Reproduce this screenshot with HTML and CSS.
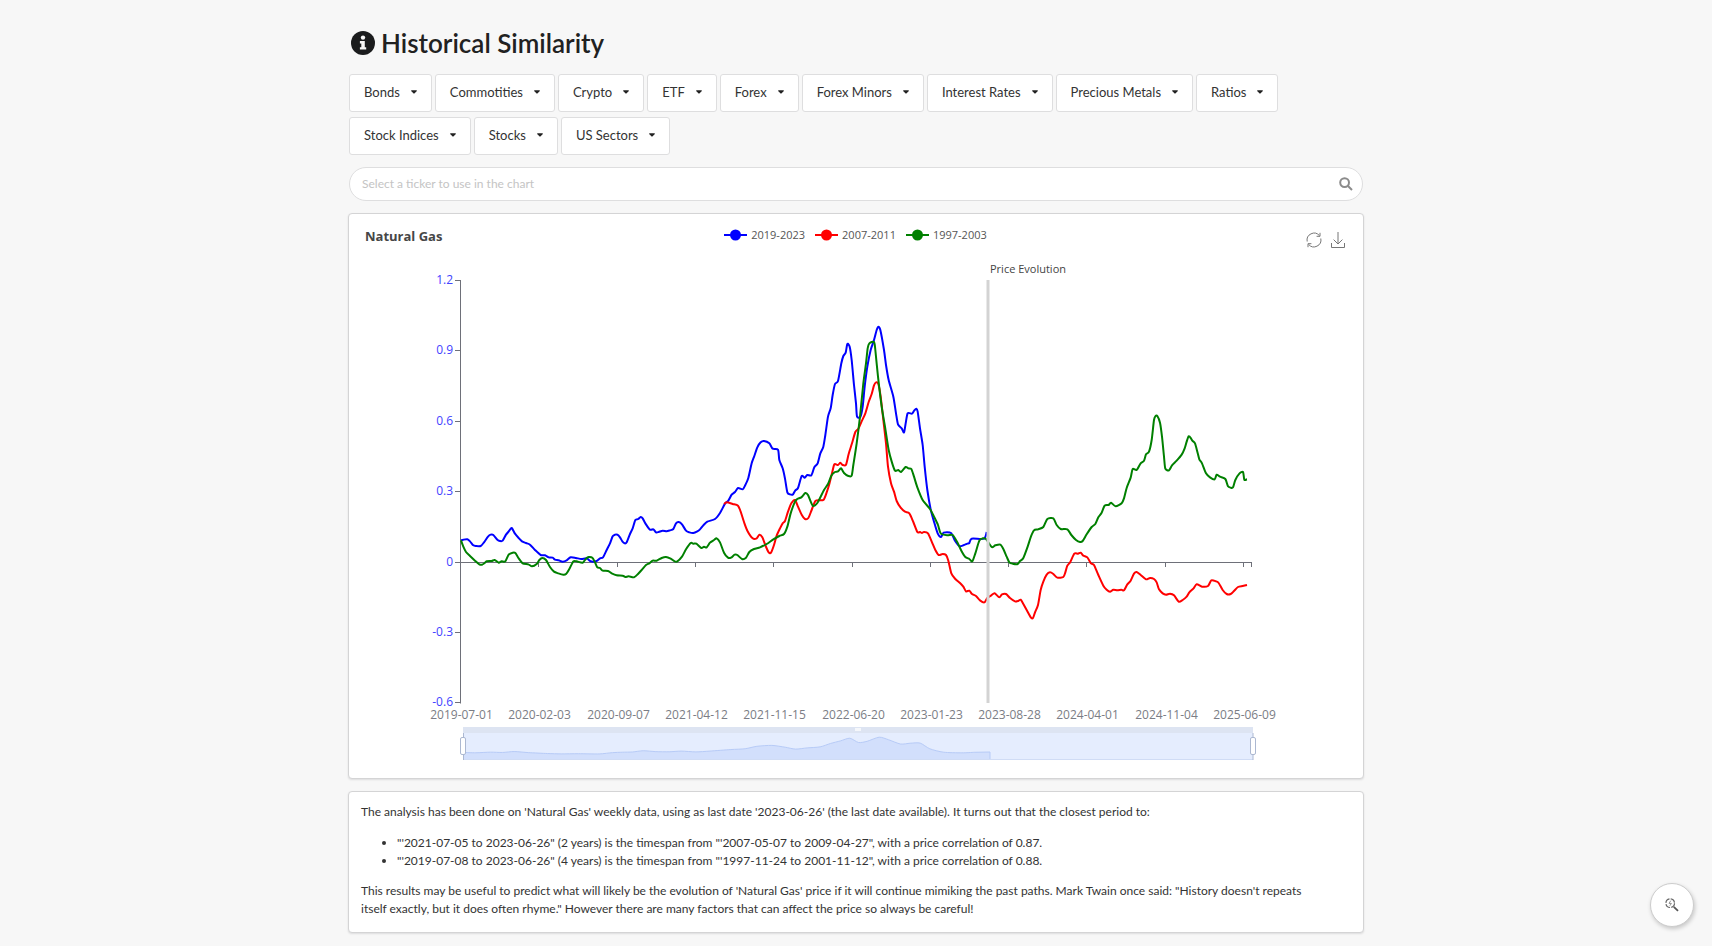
FILE: index.html
```html
<!DOCTYPE html>
<html lang="en">
<head>
<meta charset="utf-8">
<meta name="viewport" content="width=device-width, initial-scale=1">
<title>Historical Similarity</title>
<link rel="stylesheet" href="styles.css">
</head>
<body>
<svg class="defs" width="0" height="0" aria-hidden="true">
  <symbol id="caret" viewBox="0 0 7 4"><path d="M0.8 0h5.4q1.2 .4 .4 1.2L4.2 3.6q-.7 .6-1.4 0L.4 1.2Q-.4 .4 .8 0z"/></symbol>
</svg>
<main class="page">
  <h1 class="title">
    <svg class="title-icon" viewBox="0 0 24 24" aria-hidden="true"><circle cx="12" cy="12" r="12" fill="#1b1c1d"/><circle cx="12" cy="6.6" r="2.2" fill="#f7f7f7"/><path d="M8.9 10h4.9v6.2h1.4v2.4H8.900v-2.400h1.400v-3.800H8.900z" fill="#f7f7f7"/></svg>
    Historical Similarity
  </h1>
  <nav class="menus" aria-label="Tickers">
    <button class="menu" type="button">Bonds<svg class="caret"><use href="#caret"/></svg></button>
    <button class="menu" type="button">Commotities<svg class="caret"><use href="#caret"/></svg></button>
    <button class="menu" type="button">Crypto<svg class="caret"><use href="#caret"/></svg></button>
    <button class="menu" type="button">ETF<svg class="caret"><use href="#caret"/></svg></button>
    <button class="menu" type="button">Forex<svg class="caret"><use href="#caret"/></svg></button>
    <button class="menu" type="button">Forex Minors<svg class="caret"><use href="#caret"/></svg></button>
    <button class="menu" type="button">Interest Rates<svg class="caret"><use href="#caret"/></svg></button>
    <button class="menu" type="button">Precious Metals<svg class="caret"><use href="#caret"/></svg></button>
    <button class="menu" type="button">Ratios<svg class="caret"><use href="#caret"/></svg></button>
    <button class="menu" type="button">Stock Indices<svg class="caret"><use href="#caret"/></svg></button>
    <button class="menu" type="button">Stocks<svg class="caret"><use href="#caret"/></svg></button>
    <button class="menu" type="button">US Sectors<svg class="caret"><use href="#caret"/></svg></button>
  </nav>
  <label class="search">
    <input class="search-input" type="text" placeholder="Select a ticker to use in the chart" aria-label="Select a ticker to use in the chart">
    <svg class="search-icon" viewBox="0 0 14 14" aria-hidden="true"><circle cx="5.6" cy="5.6" r="4.4"/><path d="M9 9l4 4"/></svg>
  </label>

  <section class="card chart">
    <header class="chart-head">
      <h2 class="chart-title">Natural Gas</h2>
      <ul class="legend">
        <li class="legend-item blue"><svg class="mark" viewBox="0 0 23 12"><path d="M0 6h23"/><circle cx="11.5" cy="6" r="5.5"/></svg>2019-2023</li>
        <li class="legend-item red"><svg class="mark" viewBox="0 0 23 12"><path d="M0 6h23"/><circle cx="11.5" cy="6" r="5.5"/></svg>2007-2011</li>
        <li class="legend-item green"><svg class="mark" viewBox="0 0 23 12"><path d="M0 6h23"/><circle cx="11.5" cy="6" r="5.5"/></svg>1997-2003</li>
      </ul>
      <div class="tools">
        <button class="tool" type="button" aria-label="Restore"><svg viewBox="0 0 16 16"><path d="M1.200 9.500A7 7 0 0 1 13.400 3.600M14.800 6.500A7 7 0 0 1 2.600 12.400M14 .8V4.300H10.600M2 15.200V11.700H5.400"/></svg></button>
        <button class="tool" type="button" aria-label="Save as image"><svg viewBox="0 0 16 16"><path d="M8 0v12M3.600 7.600L8 12l4.400-4.400M1.500 11v4.500h13V11"/></svg></button>
      </div>
    </header>
    <svg class="plot" viewBox="349 260 1014 518" role="img" aria-label="Natural Gas price similarity chart">
      <g class="axis" id="axis"></g>
      <g class="labels" id="labels"></g>
      <text class="note" x="990" y="273">Price Evolution</text>
      <g class="series" id="series"></g>
      <path class="marker" d="M988 280V703"/>
      <g class="zoom">
        <path fill="#e5edfe" d="M463 733h790v27H463z"/>
        <path id="shadow" class="shadow"/>
        <path class="zoom-line" d="M463 759.500H1253"/>
        <path fill="#dde4f2" d="M463 727h790v6H463z"/>
        <path fill="#fff" opacity=".7" d="M855 728h6v3h-6z"/>
        <path class="zoom-edge" d="M463.500 733v27M1253 733v27"/>
        <rect class="grip" x="460.500" y="737.500" width="5" height="17" rx="1.500"/>
        <rect class="grip" x="1250.500" y="737.500" width="5" height="17" rx="1.500"/>
      </g>
    </svg>
  </section>

  <section class="card report">
    <p>The analysis has been done on 'Natural Gas' weekly data, using as last date '2023-06-26' (the last date available). It turns out that the closest period to:</p>
    <ul>
      <li>"'2021-07-05 to 2023-06-26" (2 years) is the timespan from "'2007-05-07 to 2009-04-27", with a price correlation of 0.87.</li>
      <li>"'2019-07-08 to 2023-06-26" (4 years) is the timespan from "'1997-11-24 to 2001-11-12", with a price correlation of 0.88.</li>
    </ul>
    <p>This results may be useful to predict what will likely be the evolution of 'Natural Gas' price if it will continue mimiking the past paths. Mark Twain once said: "History doesn't repeats itself exactly, but it does often rhyme." However there are many factors that can affect the price so always be careful!</p>
  </section>
</main>
<button class="fab" type="button" aria-label="Zoom">
  <svg viewBox="0 0 14 14"><circle cx="5.200" cy="5.200" r="4.300" fill="none" stroke="#666" stroke-width="1.200" stroke-dasharray="5.500 1.250"/><path d="M5.800 2.600L4 5.400h2.400L4.800 7.800" fill="none" stroke="#777" stroke-width=".8"/><path d="M8.800 8.800l4.200 4" stroke="#555" stroke-width="1.800"/></svg>
</button>
<script src="chart.js"></script>
</body>
</html>
```

FILE: styles.css
```css
* { box-sizing: border-box; }
body {
  margin: 0;
  background: #f7f7f7;
  color: #333;
  font: 12px/18px Lato, "Liberation Sans", sans-serif;
}
button { font: inherit; color: inherit; cursor: pointer; }
.defs { display: block; }
.page {
  max-width: 1030px;
  margin: 0 auto;
  padding: 27px 8px 13px;
}
.title {
  display: flex;
  align-items: center;
  gap: 6px;
  margin: 0 0 15px;
  padding-left: 2px;
  font-size: 26px;
  line-height: 32px;
  font-weight: 600;
  color: #212121;
}
.title-icon { width: 24px; height: 24px; }
.menus { display: flex; flex-wrap: wrap; gap: 5px 3px; margin-bottom: 12px; }
.menu {
  display: flex;
  align-items: center;
  gap: 11px;
  height: 38px;
  padding: 0 14px 2px;
  border: 1px solid #dededf;
  border-radius: 3px;
  background: #fff;
  color: #333;
  font-size: 13px;
}
.caret { width: 6px; height: 4px; fill: #222; }
.search {
  display: flex;
  align-items: center;
  height: 34px;
  padding: 0 9px 0 12px;
  margin-bottom: 12px;
  border: 1px solid #dededf;
  border-radius: 17px;
  background: #fff;
}
.search-input {
  flex: 1;
  min-width: 0;
  padding: 0;
  border: 0;
  outline: 0;
  background: none;
  font: inherit;
}
.search-input::placeholder { color: #c4c4c4; opacity: 1; }
.search-icon { width: 14px; height: 14px; fill: none; stroke: #8b8b8b; stroke-width: 2; }
.card {
  margin: 0 -1px;
  border: 1px solid #d4d4d5;
  border-radius: 4px;
  background: #fff;
  box-shadow: 0 1px 2px rgba(34, 36, 38, .12);
}
.chart {
  margin-bottom: 12px;
  font-family: "Open Sans", "Noto Sans", sans-serif;
  font-size: 12px;
}
.chart-head {
  display: grid;
  grid-template-columns: 1fr auto 1fr;
  height: 46px;
  padding: 12px 17px 0 16px;
}
.chart-title { margin: 0; font-size: 13px; line-height: 20px; color: #464646; }
.legend {
  display: flex;
  gap: 10px;
  margin: 0;
  padding: 0;
  list-style: none;
  color: #555;
  font-size: 11px;
}
.legend-item { display: flex; align-items: center; gap: 4px; height: 18px; }
.mark { width: 23px; height: 12px; stroke-width: 2; }
.blue .mark { stroke: #00f; fill: #00f; }
.red .mark { stroke: #f00; fill: #f00; }
.green .mark { stroke: #008000; fill: #008000; }
.mark circle { stroke: none; }
.tools { display: flex; justify-content: flex-end; gap: 8px; padding-top: 6px; }
.tool { width: 16px; height: 16px; padding: 0; border: 0; background: none; }
.tool svg { display: block; width: 16px; height: 16px; fill: none; stroke: #777; }
.plot { display: block; width: 100%; height: auto; }
.axis { fill: none; stroke: #6e7079; }
.x-label { fill: #7b7d85; text-anchor: middle; }
.y-label { fill: #4343ff; text-anchor: end; }
.note { fill: #444; font-size: 11px; }
.series { fill: none; stroke-width: 2; stroke-linejoin: round; }
.marker { stroke: #d3d3d3; stroke-width: 3; }
.shadow { fill: #d2dffc; stroke: #b7cbf7; }
.zoom-line { stroke: #d0dcf5; }
.zoom-edge { stroke: #acb8d1; }
.grip { fill: #fff; stroke: #acb8d1; }
.report { padding: 11px 36px 14px 12px; }
.report p { margin: 0; }
.report ul { margin: 13px 0 12px; padding-left: 36px; }
.fab {
  position: fixed;
  right: 18px;
  bottom: 19px;
  display: grid;
  place-items: center;
  width: 44px;
  height: 44px;
  padding: 0;
  border: 1px solid #ccc;
  border-radius: 50%;
  background: #fff;
  box-shadow: 1px 2px 4px rgba(0, 0, 0, .2);
}
.fab svg { width: 14px; height: 14px; }
```

FILE: chart.js
```js
// Each series is a list of parts: [origin x, origin y, "x,y x,y ..."] in thirds of a pixel.
const SERIES = [
  ["#00f", [
    [420, 480, "123,181 130,179 142,178 150,184 160,196 168,198 182,198 192,187 204,170 212,164 220,165 232,179 240,183 248,182 258,164 268,152 275,144 285,161 296,174 306,184 318,189 330,194 345,210 362,225 375,226 386,232 398,233 405,239 416,241 428,245 440,241 452,232 468,234 484,237 500,235 512,244 530,243 540,235 549,232 560,210 570,190 578,169 585,164 592,164 600,172 607,184 614,190 620,187 630,162 638,145 646,120 655,117 662,111 668,115 676,130 690,149 700,148 708,157 716,156 728,152 740,154 750,151 760,147 768,130 776,126 786,133 798,152 808,157 820,159 832,154"],
    [700, 300, "0,688 10,676 22,665 45,657 60,639 75,611 85,602 95,584 105,576 114,564 128,568 136,555 145,534 155,490 163,468 172,442 182,427 192,423 208,430 218,446 234,449 238,480 248,505 255,536 262,577 270,583 279,583 286,571 294,564 305,528 314,533 322,525 334,526 343,502 353,490 361,460 370,440 376,405 384,350 392,325 398,285 405,252 414,243 424,190 430,168 437,158 442,132 449,140 455,180 462,255 468,310 471,349 481,351 488,320 494,260 502,200 512,150 522,120 530,90 535,80 541,90 552,150 558,195 566,240 580,290 588,340 594,373 605,385 612,397 617,370 623,340 636,341 643,331 649,326 653,335 660,385 668,435 674,500 682,570 692,628 702,665 713,700 723,711 731,698 753,699 765,722 778,738 790,736 802,731 808,729 815,716 852,716 860,696"]
  ]],
  ["#f00", [
    [700, 300, "72,612 80,607 98,612 114,617 122,635 132,666 142,692 158,715 170,715 178,704 187,712 197,738 206,757 213,758 222,735 230,707 240,685 248,670 255,663 264,635 274,610 285,600 294,620 305,644 315,657 325,654 335,630 347,602 370,600 380,577 388,552 396,520 403,493 414,495 421,488 428,495 438,494 446,462 456,430 466,396 475,386 486,362 496,340 506,306 515,282 522,256 528,247 535,252 542,290 550,360 558,430 564,500 573,550 582,575 590,603 602,623 615,635 628,640 640,666 652,696 660,696 666,699 672,696 684,700 696,727 706,750 716,765 728,762 738,765 745,782 754,820 766,837"],
    [960, 400, "0,549 10,560 18,574 28,572 36,582 48,588 60,601 73,607 82,594 94,586 104,580 118,592 126,583 138,582 150,594 165,604 175,603 182,599 190,612 200,630 213,653 219,654 225,637 234,615 242,570 250,545 260,524 270,517 280,522 292,533 310,531 316,517 322,497 331,486 343,461 354,461 362,458 370,467 382,472 393,490 402,495 415,525 430,557 440,569 450,575 460,569 472,571 484,569 492,571 502,553 512,542 522,521 530,516 542,525 558,538 570,534 582,537 590,547 597,568 608,580 618,584 630,581 642,586 656,605 668,600 680,590 688,577 700,566 710,553 726,560 744,558 754,541 768,544 776,549 788,570 800,582 812,582 822,573 834,561 848,558 861,555"]
  ]],
  ["#008000", [
    [420, 480, "123,181 130,200 138,216 150,228 165,242 178,253 186,254 194,249 200,244 215,243 224,240 236,248 245,244 256,244 266,224 278,218 286,219 296,235 308,250 325,253 336,259 350,252 358,240 367,234 378,240 390,261 402,275 415,280 430,284 438,282 448,267 460,244 470,244 488,248 498,236 506,231 517,233 525,247 532,262 540,264 548,272 564,273 575,280 590,286 608,287 616,291 626,289 642,292 654,282 665,270 678,255 688,250 698,242 710,242 725,234 738,231 752,236 764,244 772,244 786,230 798,208 812,189 820,191 829,191"],
    [700, 300, "4,744 12,740 20,742 30,728 42,720 50,715 60,727 72,758 84,773 93,773 104,764 112,765 126,777 138,773 148,756 162,747 180,742 200,732 220,718 238,708 252,702 262,680 272,640 285,605 292,597 304,592 316,579 324,585 338,617 352,609 372,570 384,552 394,527 405,516 414,514 423,505 432,519 445,528 455,527 460,495 470,430 480,350 490,250 498,190 503,145 508,130 522,126 526,150 534,230 545,320 555,380 566,450 576,488 585,512 595,510 603,516 617,501 625,505 634,507 642,530 652,562 668,600 690,627 702,650 714,675 722,700 742,706 758,705 772,727 784,752 796,771 808,777 817,784 826,760 838,722 848,715 858,717"],
    [960, 400, "95,441 106,436 121,434 130,447 140,470 148,487 158,491 173,492 180,483 190,474 203,440 213,409 222,391 234,388 250,381 262,357 280,355 290,375 302,387 322,388 334,405 348,420 360,426 368,423 380,403 395,381 406,372 415,352 424,340 434,317 446,315 453,308 467,319 485,310 492,295 500,264 512,233 518,207 530,210 542,190 552,182 558,163 567,155 575,120 582,60 587,48 592,48 600,68 606,110 612,170 616,206 627,211 636,196 650,182 665,164 674,145 680,125 686,109 692,114 697,122 705,130 712,155 718,178 726,190 738,220 750,232 764,238 770,224 780,230 796,237 804,259 812,263 819,262 826,240 838,221 849,216 853,239 861,238"]
  ]]
];
const NS = "http://www.w3.org/2000/svg";
function add(parent, name, attrs, text) {
  const el = document.createElementNS(NS, name);
  for (const key in attrs) el.setAttribute(key, attrs[key]);
  if (text) el.textContent = text;
  document.getElementById(parent).append(el);
}
function points(parts) {
  return parts.flatMap(([ox, oy, list]) => list.split(" ").map(pair => {
    const [x, y] = pair.split(",").map(Number);
    return [ox + x / 3, oy + y / 3];
  }));
}
function smooth(p) {
  let d = "M" + p[0];
  for (let i = 0; i < p.length - 1; i++) {
    const a = p[i - 1] || p[i], b = p[i], c = p[i + 1], e = p[i + 2] || c;
    d += `C${b[0] + (c[0] - a[0]) / 8},${b[1] + (c[1] - a[1]) / 8} ${c[0] - (e[0] - b[0]) / 8},${c[1] - (e[1] - b[1]) / 8} ${c}`;
  }
  return d;
}
for (const [color, parts] of SERIES) add("series", "path", { d: smooth(points(parts)), stroke: color });

const mini = points(SERIES[0][1]).filter((p, i) => i % 4 === 0).map(([x, y]) => [x + 2.5, 754 - 17 * (562 - y) / 234.7]);
document.getElementById("shadow").setAttribute("d", smooth(mini) + "L990,752L990,759.5H463.5Z");

add("axis", "path", { d: "M460.5 280V703.5M460 562.5H1252" });
["1.2", "0.9", "0.6", "0.3", "0", "-0.3", "-0.6"].forEach((text, i) => {
  const y = Math.round(280 + i * 70.4);
  add("axis", "path", { d: `M455 ${y + 0.5}h6` });
  add("labels", "text", { x: 453, y: y + 4, class: "y-label" }, text);
});
["2019-07-01", "2020-02-03", "2020-09-07", "2021-04-12", "2021-11-15", "2022-06-20", "2023-01-23", "2023-08-28", "2024-04-01", "2024-11-04", "2025-06-09"].forEach((text, i) => {
  const x = Math.round(460 + i * 78.3) + 0.5;
  add("axis", "path", { d: `M${x} 562v5` });
  add("labels", "text", { x: x + 1, y: 719, class: "x-label" }, text);
});
add("axis", "path", { d: "M1251.5 562v5" });
```
